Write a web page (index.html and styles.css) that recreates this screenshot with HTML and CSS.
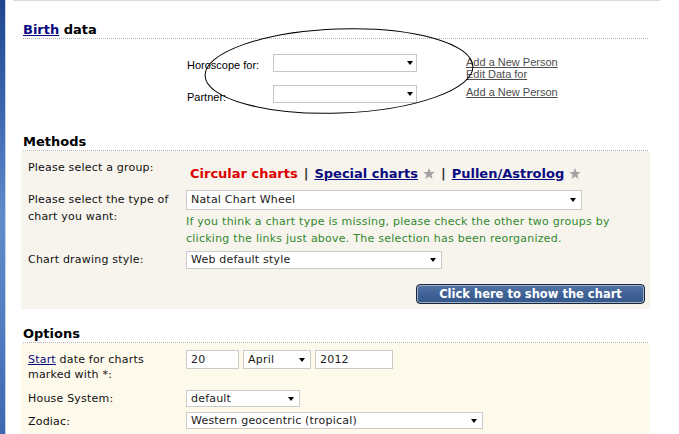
FILE: index.html
```html
<!DOCTYPE html>
<html>
<head>
<meta charset="utf-8">
<title>Chart</title>
<link rel="stylesheet" href="styles.css">
</head>
<body>
<div class="desk"></div>
<div class="main">
  <div class="topline"></div>

  <h2 class="head head-first"><a href="#">Birth</a> data</h2>
  <div class="birth">
    <div class="birth-fields">
      <span class="blabel">Horoscope for:</span>
      <div class="bsel"><i class="arrow"></i></div>
      <span class="blabel blabel2">Partner:</span>
      <div class="bsel"><i class="arrow"></i></div>
    </div>
    <div class="birth-links">
      <a href="#">Add a New Person</a>
      <a href="#">Edit Data for</a>
      <a href="#" class="gap">Add a New Person</a>
    </div>
    <svg class="circle" width="290" height="100" viewBox="0 0 290 100"><ellipse cx="139" cy="46" rx="134" ry="42" transform="rotate(-2 139 46)" fill="none" stroke="#000" stroke-width="1"/></svg>
  </div>

  <h2 class="head">Methods</h2>
  <div class="box methods">
    <div class="row">
      <div class="label">Please select a group:</div>
      <div class="ctrl groups"><a href="#" class="current">Circular charts</a><span class="sep">|</span><a href="#">Special charts</a><svg class="star" width="12" height="11" viewBox="0 0 12 11"><polygon points="6,0 7.5,3.9 11.8,4.1 8.4,6.7 9.6,10.9 6,8.5 2.4,10.9 3.6,6.7 0.2,4.1 4.5,3.9" fill="#a3a3a3"/></svg><span class="sep">|</span><a href="#">Pullen/Astrolog</a><svg class="star" width="12" height="11" viewBox="0 0 12 11"><polygon points="6,0 7.5,3.9 11.8,4.1 8.4,6.7 9.6,10.9 6,8.5 2.4,10.9 3.6,6.7 0.2,4.1 4.5,3.9" fill="#a3a3a3"/></svg></div>
    </div>
    <div class="row row-type">
      <div class="label label-type">Please select the type of chart you want:</div>
      <div class="ctrl">
        <div class="sel sel-natal"><span>Natal Chart Wheel</span><i class="arrow"></i></div>
        <p class="hint">If you think a chart type is missing, please check the other two groups by clicking the links just above. The selection has been reorganized.</p>
      </div>
    </div>
    <div class="row row-style">
      <div class="label">Chart drawing style:</div>
      <div class="ctrl">
        <div class="sel sel-style"><span>Web default style</span><i class="arrow"></i></div>
      </div>
    </div>
    <div class="btn-row">
      <button class="show">Click here to show the chart</button>
    </div>
  </div>

  <h2 class="head head-options">Options</h2>
  <div class="box options">
    <div class="row orow">
      <div class="label olabel olabel-date"><a href="#">Start</a> date for charts marked with *:</div>
      <div class="ctrl date">
        <div class="inp inp-day">20</div>
        <div class="sel osel sel-month"><span>April</span><i class="arrow"></i></div>
        <div class="inp inp-year">2012</div>
      </div>
    </div>
    <div class="row orow orow-house">
      <div class="label olabel olabel-house">House System:</div>
      <div class="ctrl">
        <div class="sel osel sel-house"><span>default</span><i class="arrow"></i></div>
      </div>
    </div>
    <div class="row orow orow-zodiac">
      <div class="label olabel olabel-zodiac">Zodiac:</div>
      <div class="ctrl">
        <div class="sel osel sel-zodiac"><span>Western geocentric (tropical)</span><i class="arrow"></i></div>
      </div>
    </div>
  </div>
</div>
</body>
</html>
```

FILE: styles.css
```css
html, body {
  margin: 0;
  padding: 0;
  background: #fff;
}

body {
  display: flex;
  min-height: 434px;
  font-family: "DejaVu Sans", Verdana, sans-serif;
  font-size: 11px;
  color: #111;
  overflow: hidden;
}

.desk {
  flex: none;
  width: 5px;
  border-right: 1px solid #c9d2e2;
  background: linear-gradient(to bottom, #1f4591 0%, #3c67b0 25%, #5f8ccc 50%, #4f7dc0 75%, #3b67ae 100%);
}

.main {
  flex: 1;
  padding: 0 29px 0 15px;
}

.topline {
  height: 1px;
  background: #dadada;
  margin: 0 -10px 0 -8px;
}

.head {
  margin: 30px 2px 0;
  padding: 0;
  font: bold 13px/16px "DejaVu Sans", Verdana, sans-serif;
  color: #000;
  border-bottom: 1px dotted #b4b4b4;
}

.head-first {
  margin-top: 21px;
}

.head-options {
  margin-top: 17px;
}

.head a {
  color: #0a0a80;
  text-decoration: underline;
}

/* Birth data */
.birth {
  position: relative;
  display: flex;
  align-items: flex-start;
  padding-left: 166px;
  margin-top: 15px;
}

.birth-fields {
  display: grid;
  grid-template-columns: 86px 144px;
  row-gap: 13px;
  align-items: start;
}

.blabel {
  font: 11px/13px "Liberation Sans", Arial, sans-serif;
  color: #000;
  padding-top: 5px;
}

.blabel2 {
  padding-top: 6px;
}

.bsel {
  box-sizing: border-box;
  height: 18px;
  border: 1px solid #c6c6c6;
  background: #fff;
  display: flex;
  align-items: center;
  justify-content: flex-end;
  padding-right: 3px;
}

.arrow {
  display: block;
  width: 0;
  height: 0;
  border-left: 3.5px solid transparent;
  border-right: 3.5px solid transparent;
  border-top: 4px solid #000;
}

.birth-links {
  display: flex;
  flex-direction: column;
  align-items: flex-start;
  margin-left: 49px;
  padding-top: 2px;
  font: 11px/12px "Liberation Sans", Arial, sans-serif;
}

.birth-links a {
  color: #4d4d4d;
  text-decoration: underline;
}

.birth-links .gap {
  margin-top: 6px;
}

.circle {
  position: absolute;
  left: 179px;
  top: -29px;
  overflow: visible;
  pointer-events: none;
}

/* Boxes */
.box {
  padding: 8px 5px 5px 7px;
}

.methods {
  background: #f6f4ed;
}

.options {
  background: #fdf9eb;
  padding-top: 7px;
  padding-bottom: 10px;
}

.row {
  display: flex;
  align-items: flex-start;
}

.label {
  flex: none;
  width: 150px;
  font-size: 11px;
  line-height: 17px;
  letter-spacing: 0.2px;
  color: #111;
}

.ctrl {
  margin-left: 8px;
}

.groups {
  padding: 6px 0 0 4px;
  font: bold 13px/17px "DejaVu Sans", Verdana, sans-serif;
  white-space: nowrap;
}

.groups a {
  color: #0a0a80;
  text-decoration: underline;
}

.groups a.current {
  color: #dd0000;
  text-decoration: none;
}

.groups .sep {
  color: #333;
  margin: 0 6px;
}

.star {
  margin-left: 5px;
  vertical-align: -1px;
}

.row-type {
  margin-top: 8px;
}

.label-type {
  padding-top: 1px;
}

.sel {
  box-sizing: border-box;
  display: flex;
  align-items: center;
  justify-content: space-between;
  background: #fff;
  border: 1px solid #cbcbcb;
  padding: 0 5px 0 4px;
  color: #1a1a1a;
  font-size: 11px;
  letter-spacing: 0.2px;
  white-space: nowrap;
}

.sel-natal {
  width: 396px;
  height: 20px;
  line-height: 18px;
}

.hint {
  margin: 3px 0 0;
  color: #33882f;
  font-size: 11px;
  line-height: 17px;
  letter-spacing: 0.25px;
  width: 450px;
}

.row-style {
  margin-top: 4px;
}

.sel-style {
  width: 256px;
  height: 18px;
  line-height: 16px;
}

.btn-row {
  display: flex;
  justify-content: flex-end;
  margin-top: 15px;
}

.show {
  box-sizing: border-box;
  width: 229px;
  height: 20px;
  margin: 0;
  padding: 0;
  border: 1px solid #1b263a;
  border-radius: 4px;
  box-shadow: inset 0 0 0 1px #9db0cc;
  background: linear-gradient(to bottom, #5675a6 0%, #3f6195 50%, #355789 100%);
  color: #fff;
  font: bold 11.5px/18px "DejaVu Sans", Verdana, sans-serif;
  text-align: center;
}

/* Options */
.olabel {
  line-height: 15px;
}

.olabel a {
  color: #0a0a80;
  text-decoration: underline;
}

.olabel-date {
  padding-top: 2px;
}

.olabel-house {
  padding-top: 1px;
}

.olabel-zodiac {
  padding-top: 2px;
}

.date {
  display: flex;
  gap: 4px;
}

.inp {
  box-sizing: border-box;
  height: 19px;
  line-height: 17px;
  border: 1px solid #cbcbcb;
  background: #fff;
  padding-left: 4px;
  color: #1a1a1a;
  letter-spacing: 0.2px;
}

.inp-day {
  width: 53px;
}

.inp-year {
  width: 78px;
}

.osel {
  height: 17px;
  line-height: 15px;
}

.sel-month {
  width: 68px;
  height: 19px;
  line-height: 17px;
}

.orow-house {
  margin-top: 8px;
}

.sel-house {
  width: 114px;
}

.orow-zodiac {
  margin-top: 5px;
}

.sel-zodiac {
  width: 297px;
}
```
